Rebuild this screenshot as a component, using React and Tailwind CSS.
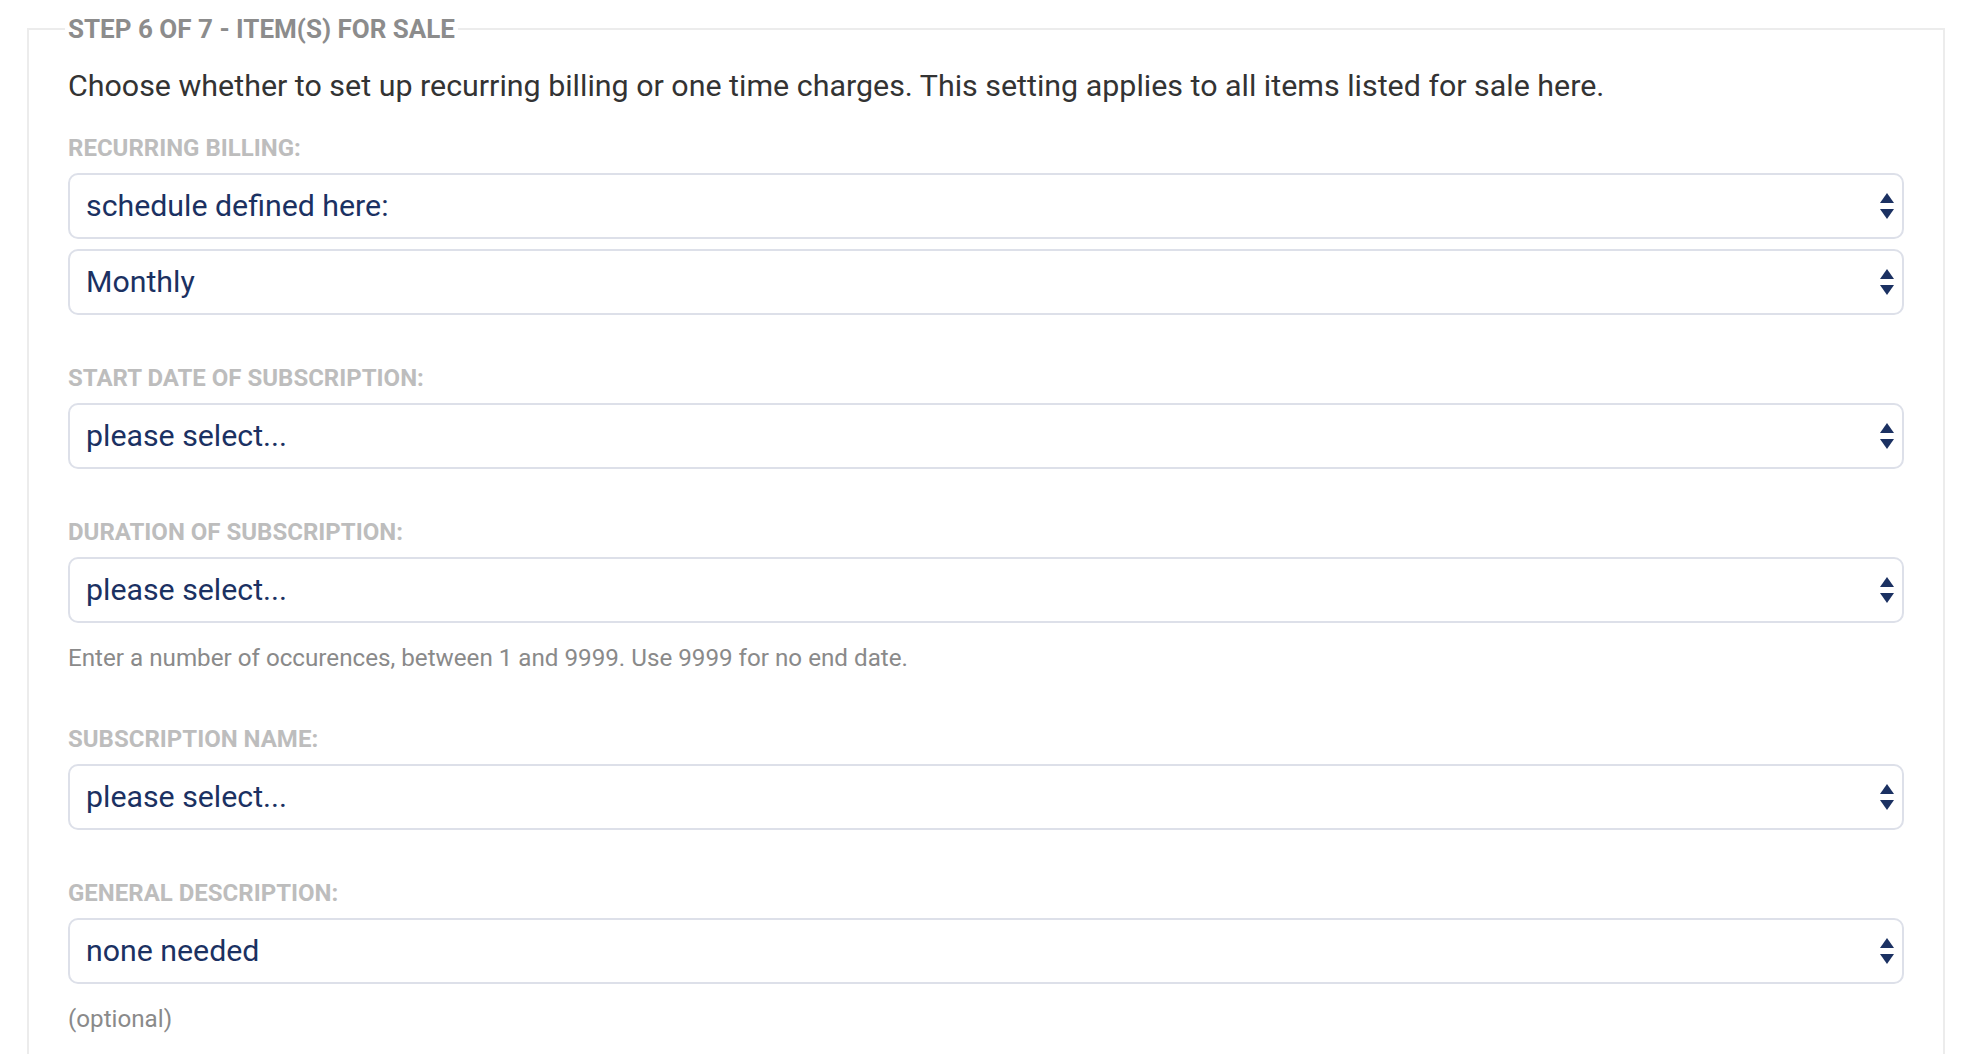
import React from 'react';

const font = { fontFamily: 'Roboto, "Liberation Sans", sans-serif' };

const SelectBox = ({ value }) => (
  <div className="h-[66px] w-full flex items-center justify-between border-2 border-[#dde0e9] rounded-[10px] bg-white pl-[16px] pr-[8px]">
    <span className="text-[30.3px] leading-[36px] text-[#1b3162]">{value}</span>
    <svg width="14" height="26" viewBox="0 0 14 26" className="shrink-0">
      <polygon points="7,0 14,10 0,10" fill="#1b3162" />
      <polygon points="0,16 14,16 7,26" fill="#1b3162" />
    </svg>
  </div>
);

const Label = ({ children, className = '' }) => (
  <div className={`text-[24px] leading-[28px] font-bold uppercase text-[#bdbdbd] ${className}`}>
    {children}
  </div>
);

const Help = ({ children }) => (
  <div className="mt-[21px] text-[24.2px] leading-[28px] text-[#8a8a8a]">{children}</div>
);

export default function App() {
  return (
    <div className="min-h-screen bg-white pl-[27px] pr-[31px] pt-[13px]" style={font}>
      <fieldset className="border-2 border-[#ececec] px-[39px] pb-[80px]">
        <legend className="px-[3px] -ml-[3px] text-[26px] leading-[32px] font-bold text-[#8c8c8c]">
          STEP 6 OF 7 - ITEM(S) FOR SALE
        </legend>

        <p className="mt-[21px] text-[30.4px] leading-[40px] text-[#333333]">
          Choose whether to set up recurring billing or one time charges. This setting applies to all items listed for sale here.
        </p>

        <Label className="mt-[28px]">Recurring billing:</Label>
        <div className="mt-[11px] flex flex-col gap-[10px]">
          <SelectBox value="schedule defined here:" />
          <SelectBox value="Monthly" />
        </div>

        <Label className="mt-[49px]">Start date of subscription:</Label>
        <div className="mt-[11px]">
          <SelectBox value="please select..." />
        </div>

        <Label className="mt-[49px]">Duration of subscription:</Label>
        <div className="mt-[11px]">
          <SelectBox value="please select..." />
        </div>
        <Help>Enter a number of occurences, between 1 and 9999. Use 9999 for no end date.</Help>

        <Label className="mt-[53px]">Subscription name:</Label>
        <div className="mt-[11px]">
          <SelectBox value="please select..." />
        </div>

        <Label className="mt-[49px]">General description:</Label>
        <div className="mt-[11px]">
          <SelectBox value="none needed" />
        </div>
        <Help>(optional)</Help>
      </fieldset>
    </div>
  );
}
